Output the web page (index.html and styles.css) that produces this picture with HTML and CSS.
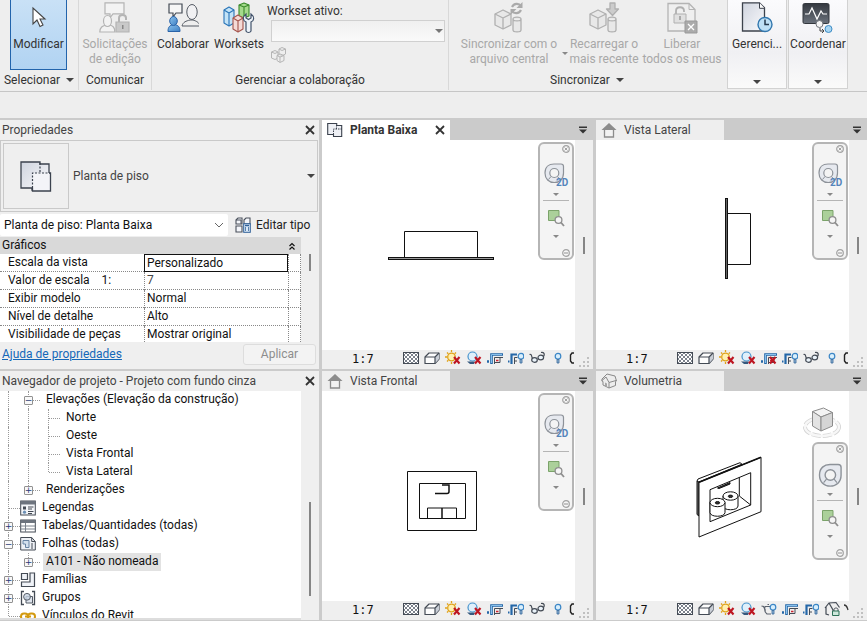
FILE: index.html
```html
<!DOCTYPE html>
<html lang="pt-BR">
<head>
<meta charset="utf-8">
<meta name="viewport" content="width=device-width, initial-scale=1">
<title>Projeto com fundo cinza</title>
<link rel="stylesheet" href="styles.css">
</head>
<body>
<svg class="sprite" aria-hidden="true">
  <defs>
    <linearGradient id="g-blue" x1="0" y1="0" x2="1" y2="1"><stop offset="0" stop-color="#8cc4ee"/><stop offset="1" stop-color="#3d7fc4"/></linearGradient>
    <linearGradient id="g-page" x1="0" y1="0" x2="1" y2="1"><stop offset="0" stop-color="#cfd4df"/><stop offset="1" stop-color="#fafafc"/></linearGradient>
    <linearGradient id="g-dark" x1="0" y1="0" x2="0" y2="1"><stop offset="0" stop-color="#34383f"/><stop offset="1" stop-color="#6b727c"/></linearGradient>
    <pattern id="p-check" width="4" height="4" patternUnits="userSpaceOnUse"><rect width="4" height="4" fill="#fff"/><path d="M0 0h2v2H0zM2 2h2v2H2z" fill="#7c828c"/></pattern>
  </defs>
  <symbol id="caret" viewBox="0 0 8 4"><path d="M0 0h8L4 4z" fill="currentColor"/></symbol>
  <symbol id="close" viewBox="0 0 10 10"><path d="M1 1l8 8M9 1L1 9" stroke="#333" stroke-width="1.8" fill="none"/></symbol>
  <symbol id="tabmenu" viewBox="0 0 10 8"><path d="M1 .5h8v1.5H1zM1 3.5h8L5 7.5z" fill="#333"/></symbol>
  <symbol id="cursor" viewBox="0 0 32 32"><path d="M10 6v16l4-4 3 6.500 3-1.500-3-6h5z" fill="#fff" stroke="#444" stroke-width="1.100"/></symbol>
  <symbol id="request" viewBox="0 0 32 32"><g fill="#f3f3f3" stroke="#b4b4b4" stroke-width="1.200"><path d="M6 .8h19v11H14l-3 4v-4H6z"/><path d="M.8 30c0-5 3-6 6-7h4c3 1 5 2 5 7z"/><ellipse cx="8.500" cy="19" rx="4" ry="5.500"/><path d="M20 21v-5c0-4 7-4 7 0v2" fill="none" stroke-width="2"/><path d="M17 20h13v10H17z" fill="#c9c9c9"/></g><path d="M23 23h1.500v4H23z" fill="#888"/></symbol>
  <symbol id="collab" viewBox="0 0 32 32"><path d="M2 2h13v9H9l-3 4v-4H2z" fill="#f6f6f6" stroke="#444b55" stroke-width="1.200"/><path d="M1 29.500c0-5 2-6 5-7h2c3 1 5 2 5 7z" fill="url(#g-blue)" stroke="#2a63a8"/><ellipse cx="6.500" cy="19" rx="3.800" ry="4.500" fill="url(#g-blue)" stroke="#2a63a8"/><path d="M15 24c1-4 4-5 8-6h3c3 1 6 2 7 6z" fill="#eee" stroke="#555b64"/><ellipse cx="25" cy="10" rx="5.200" ry="7.500" fill="#f1f1f3" stroke="#555b64"/></symbol>
  <symbol id="worksets" viewBox="0 0 32 32"><g stroke-width="1.100" stroke-linejoin="round"><path d="M16 3l5-2 5 2v11l-5 2-5-2z" fill="#a5da8c" stroke="#3a8a2a"/><path d="M16 3l5 2 5-2M21 5v11" fill="none" stroke="#3a8a2a"/><path d="M1 8l5-3 5 3v13l-5 3-5-3z" fill="#c3e3f7" stroke="#2a75b8"/><path d="M1 8l5 3 5-3M6 11v13" fill="none" stroke="#2a75b8"/><path d="M10 16l5-3 5 3v11l-5 3-5-3z" fill="#f5dbd7" stroke="#a4554d"/><path d="M10 16l5 3 5-3M15 19v11" fill="none" stroke="#a4554d"/></g><path d="M23 12v4l2.500 1.500L28 16v-4c4 3 3 7 0 8v9c-1 2-4 2-5 0v-9c-3-1-4-5 0-8z" fill="#eef3f8" stroke="#42536b" stroke-width="1.200"/></symbol>
  <symbol id="smallcubes" viewBox="0 0 16 16"><g fill="#eee" stroke="#b5b5b5"><path d="M8 2l3-1.500L14.500 2v5L11 9 8 7zM8 2l3 1.500L14.500 2"/><path d="M.5 5L4 3.500 7 5v6l-3 1.500L.5 11zM.5 5L4 6.500 7 5"/><path d="M6 8.500L9 7l4 1.500v5L9 15.500l-3-2zM6 8.500L9 10l4-1.500M9 10v5"/></g></symbol>
  <symbol id="sync" viewBox="0 0 32 32"><g fill="#e8e8e8" stroke="#b0b0b0" stroke-width="1.300" stroke-linejoin="round"><path d="M2 12l8-4 8 4v11l-8 4-8-4z"/><path d="M2 12l8 4 8-4M10 16v11" fill="none"/><path d="M20 17c0-2.500 8-2.500 8 0v11c0 2.500-8 2.500-8 0zM20 17c0 2.500 8 2.500 8 0"/></g><g fill="none" stroke="#aaa" stroke-width="2.200"><path d="M19 5c2-4 7-4 9-1M28 8c-2 4-7 4-9 1"/></g><path d="M29.500 0v6h-6zM17.500 13V7h6z" fill="#aaa"/></symbol>
  <symbol id="reload" viewBox="0 0 32 32"><g fill="#e8e8e8" stroke="#b0b0b0" stroke-width="1.300" stroke-linejoin="round"><path d="M2 12l8-4 8 4v11l-8 4-8-4z"/><path d="M2 12l8 4 8-4M10 16v11" fill="none"/><path d="M20 17c0-2.500 8-2.500 8 0v11c0 2.500-8 2.500-8 0zM20 17c0 2.500 8 2.500 8 0"/><path d="M22 1h5v6h3.500l-6 6.500-6-6.500H22z" fill="#ccc"/></g></symbol>
  <symbol id="release" viewBox="0 0 32 32"><path d="M2 1.500h21l6 6V29H2z" fill="#efefef" stroke="#b4b4b4" stroke-width="1.300"/><path d="M23 1.500v6h6" fill="none" stroke="#b4b4b4"/><path d="M10 12V9c0-5 8-5 8 0v1" fill="none" stroke="#b0b0b0" stroke-width="1.800"/><path d="M8 12h12v9H8z" fill="#e0e0e0" stroke="#b0b0b0"/><path d="M13 14h2v4h-2z" fill="#aaa"/><path d="M19 19h12v12H19z" fill="#ababab" stroke="#999"/><path d="M22 22l6 6M28 22l-6 6" stroke="#fff" stroke-width="1.300"/></symbol>
  <symbol id="manage" viewBox="0 0 32 32"><path d="M1.500.8h17l5 5V29h-22z" fill="url(#g-page)" stroke="#3c424c" stroke-width="1.300"/><path d="M18.500.8v5.500h5" fill="#fff" stroke="#3c424c"/><circle cx="24" cy="22.500" r="7" fill="#bfe0f5" stroke="#3277ae" stroke-width="1.400"/><path d="M24 17.500v5h4" fill="none" stroke="#26394c" stroke-width="1.500"/></symbol>
  <symbol id="coord" viewBox="0 0 32 32"><rect x="1" y="1.500" width="26" height="20" rx="1.500" fill="url(#g-dark)" stroke="#33373d"/><path d="M3 12h4l3-6 5 11 4-8 2 3h4" fill="none" stroke="#fff" stroke-width="1.200"/><circle cx="17.500" cy="22" r="3.500" fill="#f5f5f5" stroke="#73777d"/><path d="M18 26v3h4M20 27l2 2-2 2" fill="none" stroke="#444"/><circle cx="26.500" cy="27" r="3.500" fill="#a8d6f4" stroke="#3e8cc4"/></symbol>
  <symbol id="plan-lg" viewBox="0 0 32 32"><path d="M1 2h19v2h9v26H12v-2H1z" fill="url(#g-page)" stroke="#3b424e" stroke-width="1.300"/><path d="M12.500 13H30v18H12.500z" fill="#f3f4f8"/><path d="M29 13h1.500v18H12.500v-3" fill="none" stroke="#3b424e" stroke-width="1.300"/><path d="M20 3v10M12.500 28V13H30" fill="none" stroke="#3b424e" stroke-width="1.200" stroke-dasharray="2 1.500"/></symbol>
  <symbol id="plan-sm" viewBox="0 0 16 16"><path d="M.7 1.500h9v2h5v11H6.500v-2H.7z" fill="#eef0f5" stroke="#3b424e" stroke-width="1.100"/><path d="M9.500 3v4M6.500 12.500V7h9" fill="none" stroke="#3b424e" stroke-dasharray="1.500 1"/></symbol>
  <symbol id="house" viewBox="0 0 16 16"><path d="M3.500 7v8h9V7z" fill="#f2f2f2" stroke="#8c8c8c" stroke-width="1.300"/><path d="M8 1l7.500 7h-15z" fill="#8c8c8c"/></symbol>
  <symbol id="house3d" viewBox="0 0 16 16"><path d="M1 6l5-5 8 2 1.500 5-1 .5v4L8 15l-6-3V8.500L.8 8z" fill="#ededed" stroke="#898989" stroke-linejoin="round"/><path d="M1 7.500L5 4l3 5.500 7-2M8 9.500V15" fill="none" stroke="#898989"/><path d="M4 13V9.500l2 1V14z" fill="#a5a5a5"/></symbol>
  <symbol id="edit-type" viewBox="0 0 16 16"><g fill="#f4f6fa" stroke="#4a515c" stroke-width="1.100"><path d="M1 3l2-2h4v6H1zM9 3l2-2h4v6H9zM1 9h6v6H1z"/></g><path d="M1 3h5V7" fill="none" stroke="#4a515c"/><rect x="8.700" y="6.700" width="6.600" height="8.600" fill="#dbe9f7" stroke="#2f6098"/><path d="M10 8.500h4M10 11h1M13 11h1M10 13h1M13 13h1" stroke="#2f6098" stroke-width="1.300"/></symbol>
  <symbol id="legend" viewBox="0 0 16 16"><rect x=".7" y="1" width="14.600" height="14" fill="#f4f6f9" stroke="#444b55"/><path d="M1 1h14v3.500H1z" fill="#6d747e"/><path d="M3 6.500h3v3H3z" fill="#444b55"/><circle cx="4.500" cy="12.200" r="1.600" fill="#6b8fb5"/><path d="M8 7h5.500M8 9h4M8 11.500h5.500M8 13.500h4" stroke="#444b55"/></symbol>
  <symbol id="table" viewBox="0 0 16 16"><rect x=".7" y="2" width="14.600" height="12" fill="#fff" stroke="#444b55"/><path d="M1 2h14v3H1z" fill="#6d747e"/><path d="M1 8h14M1 11h14M5.500 5v9" stroke="#7b828c"/></symbol>
  <symbol id="sheet" viewBox="0 0 16 16"><path d="M.7 1.500h11l3.600 4V14H.7z" fill="#eef1f6" stroke="#444b55"/><path d="M11.700 1.500v4h3.500" fill="none" stroke="#444b55"/><path d="M3 8V4.500h6v7H5.500V8z" fill="#d3e0ee" stroke="#6783a3"/><path d="M12 7v6" stroke="#444b55"/></symbol>
  <symbol id="family" viewBox="0 0 16 16"><path d="M1.500 1.500h6v6h-6zM10 1v9H1.500v4.500h13V1z" fill="#f0f3f8" stroke="#444b55" stroke-width="1.200"/></symbol>
  <symbol id="group" viewBox="0 0 16 16"><path d="M4 1.500H1.500v13H4M12 1.500h2.500v13H12" fill="none" stroke="#444b55" stroke-width="1.300"/><path d="M6 6.500h6.500V13H6z" fill="#dfe5ee" stroke="#555c67"/><circle cx="7" cy="6.800" r="3.400" fill="#c7d3e2" fill-opacity=".8" stroke="#555c67"/></symbol>
  <symbol id="link" viewBox="0 0 16 16"><g fill="none" stroke="#d39a10" stroke-width="2"><rect x="1" y="5.500" width="7" height="6" rx="3"/><rect x="8" y="5.500" width="7" height="6" rx="3"/><path d="M5 8.500h6"/></g></symbol>
  <symbol id="s-check" viewBox="0 0 16 16"><rect x=".5" y="2.500" width="15" height="11" fill="url(#p-check)" stroke="#444b55"/></symbol>
  <symbol id="s-box" viewBox="0 0 16 16"><path d="M1 7l4-4h10v6l-4 4.500H1z" fill="#fdfdfd" stroke="#444b55" stroke-width="1.200" stroke-linejoin="round"/><path d="M11 7l4-4v6l-4 4.500z" fill="#c9ced6"/><path d="M1 7h10v6.500M11 7l4-4" fill="none" stroke="#444b55" stroke-width="1.200"/></symbol>
  <symbol id="redx" viewBox="0 0 16 16"><path d="M9 7l5.500 6.500M14.500 7L9 13.500" stroke="#bd1622" stroke-width="2.100"/></symbol>
  <symbol id="s-sun" viewBox="0 0 16 16"><circle cx="6.500" cy="7" r="3.800" fill="#fff0b0" stroke="#e0a21a" stroke-width="1.300"/><path d="M6.500 0v2M0 7h2M2 2.500l1.300 1.300M11 2.500L9.700 3.800M2 11.500l1.300-1.300M6.500 12v2" stroke="#e0a21a" stroke-width="1.300"/><use href="#redx"/></symbol>
  <symbol id="s-shadow" viewBox="0 0 16 16"><circle cx="6.500" cy="6.500" r="4.500" fill="#dff0fb" stroke="#4592cc" stroke-width="1.200"/><path d="M1 11.500h8l-1 2.500H4z" fill="#36597e"/><use href="#redx"/></symbol>
  <symbol id="s-crop" viewBox="0 0 16 16"><path d="M0 11.500h2M4.500 14V4.500H16" fill="none" stroke="#2467a8" stroke-width="2.600"/><path d="M4.500 13V4.500H15" fill="none" stroke="#86c0ec"/><path d="M7.500 14V7.500H16M13 8v4.500H7" fill="none" stroke="#444b55"/><path d="M9 10.500h2.500" fill="none" stroke="#cc2430" stroke-width="1.500"/></symbol>
  <symbol id="s-cropx" viewBox="0 0 16 16"><use href="#s-crop"/><use href="#redx"/></symbol>
  <symbol id="bulb" viewBox="0 0 16 16"><circle cx="8" cy="6.200" r="2.800" fill="#d9effc" stroke="#3b86c6" stroke-width="1.200"/><path d="M7 9.500h2V13H7z" fill="#8fb4d4" stroke="#37689a" stroke-width=".8"/></symbol>
  <symbol id="s-cropbulb" viewBox="0 0 16 16"><path d="M0 11.500h1.500M3.500 14V4.500H9" fill="none" stroke="#2467a8" stroke-width="2.200"/><path d="M6.500 14V7.500H9.500M9 11H7" fill="none" stroke="#444b55"/><use href="#bulb" x="5"/></symbol>
  <symbol id="s-glasses" viewBox="0 0 16 16"><path d="M.5 4.500c2-1 2 2 3 4M12 2.500c3-.5 4 1.500 2.500 4" fill="none" stroke="#444b55" stroke-width="1.200"/><ellipse cx="5.500" cy="10" rx="2.800" ry="2.300" fill="#eaf3fa" stroke="#444b55" stroke-width="1.200"/><ellipse cx="11.800" cy="7.500" rx="2.800" ry="2.300" fill="#eaf3fa" stroke="#444b55" stroke-width="1.200"/></symbol>
  <symbol id="s-bulb" viewBox="0 0 16 16"><use href="#bulb"/></symbol>
  <symbol id="s-part" viewBox="0 0 16 16"><path d="M6 3H4L2.500 5v6L4 13h2" fill="none" stroke="#222" stroke-width="1.400"/></symbol>
  <symbol id="s-partarc" viewBox="0 0 16 16"><path d="M2 4c3 0 3 2 4 5" fill="none" stroke="#333" stroke-width="1.300"/></symbol>
  <symbol id="s-teapot" viewBox="0 0 16 16"><path d="M.5 5l2 .5 2 4M4 5.500h6M6.500 3.500h1.500M4 5.500c-1 4 0 6 2 7.500h4" fill="none" stroke="#5c636e" stroke-width="1.200"/><use href="#bulb" x="4"/></symbol>
  <symbol id="s-houselock" viewBox="0 0 16 16"><path d="M1 7l4-5 7-.5 3.500 5M2 6v7l3 1M5 2l4 7v3" fill="#eee" stroke="#444b55" stroke-width="1.200"/><path d="M10 10V8.500c0-2 4-2 4 0V10" fill="none" stroke="#444b55"/><path d="M8.500 10h6.500v4.500H8.500z" fill="#cfe8dc" stroke="#2e7258"/></symbol>
  <symbol id="grip" viewBox="0 0 12 12"><path d="M8 0h2v2H8zM4 4h2v2H4zM8 4h2v2H8zM0 8h2v2H0zM4 8h2v2H4zM8 8h2v2H8z" fill="#c0c0c0"/></symbol>
  <symbol id="n-close" viewBox="0 0 8 8"><circle cx="4" cy="4" r="3.300" fill="#f6f6f6" stroke="#a2a2a2" stroke-width="1.200"/><path d="M2.500 2.500l3 3M5.500 2.500l-3 3" stroke="#a2a2a2"/></symbol>
  <symbol id="n-min" viewBox="0 0 8 8"><circle cx="4" cy="4" r="3.300" fill="#f6f6f6" stroke="#a2a2a2" stroke-width="1.200"/><path d="M2 4h4" stroke="#a2a2a2" stroke-width="1.200"/></symbol>
  <symbol id="n-wheel" viewBox="0 0 28 28"><path d="M3 12c0-6 4-9 9-9h7c1.500 0 2.500 1 2.500 2.500V12c0 6-4 9.500-9.300 9.500S3 18 3 12z" fill="#e6e9ef" stroke="#8d9299" stroke-width="1.200"/><circle cx="12.300" cy="12" r="4.500" fill="#f4f4f4" stroke="#8d9299" stroke-width="1.200"/><path d="M9 15.500L6.500 18.500M15.500 15.500l2.500 3" stroke="#8d9299"/></symbol>
  <symbol id="n-zoom" viewBox="0 0 18 18"><path d="M1.500 1.500H12v10H1.500z" fill="#abd09a" stroke="#7ba36a"/><circle cx="11.500" cy="11" r="3.400" fill="#f5f5f5" stroke="#8e8e8e" stroke-width="1.300"/><path d="M14 13.500l3 3.500" stroke="#8e8e8e" stroke-width="1.800"/></symbol>
</svg>

<header class="ribbon">
  <section class="group g-select">
    <div class="tools"><button class="tool active"><svg class="i32"><use href="#cursor"/></svg><span>Modificar</span></button></div>
    <button class="group-label">Selecionar <svg class="caret"><use href="#caret"/></svg></button>
  </section>
  <section class="group g-comm">
    <div class="tools"><button class="tool" disabled><svg class="i32"><use href="#request"/></svg><span>Solicitações<br>de edição</span></button></div>
    <div class="group-label">Comunicar</div>
  </section>
  <section class="group g-collab">
    <div class="tools">
      <button class="tool"><svg class="i32"><use href="#collab"/></svg><span>Colaborar</span></button>
      <button class="tool"><svg class="i32"><use href="#worksets"/></svg><span>Worksets</span></button>
      <div class="workset">
        <label for="workset">Workset ativo:</label>
        <div class="combo"><select id="workset"><option></option></select><svg class="caret"><use href="#caret"/></svg></div>
        <button class="mini" disabled aria-label="Exibir worksets"><svg class="i16"><use href="#smallcubes"/></svg></button>
      </div>
    </div>
    <div class="group-label">Gerenciar a colaboração</div>
  </section>
  <section class="group g-sync">
    <div class="tools">
      <button class="tool t-sync" disabled><svg class="i32"><use href="#sync"/></svg><span>Sincronizar com o<br>arquivo central</span></button>
      <button class="split" disabled aria-label="Mais opções"><svg><use href="#caret"/></svg></button>
      <button class="tool t-reload" disabled><svg class="i32"><use href="#reload"/></svg><span>Recarregar o<br>mais recente</span></button>
      <button class="tool t-release" disabled><svg class="i32"><use href="#release"/></svg><span>Liberar<br>todos os meus</span></button>
    </div>
    <button class="group-label">Sincronizar <svg class="caret"><use href="#caret"/></svg></button>
  </section>
  <button class="folded"><svg class="i32"><use href="#manage"/></svg><span>Gerenci...</span><svg class="caret"><use href="#caret"/></svg></button>
  <button class="folded"><svg class="i32"><use href="#coord"/></svg><span>Coordenar</span><svg class="caret"><use href="#caret"/></svg></button>
</header>

<main class="workspace">
  <section class="panel">
    <header class="panel-title"><h2>Propriedades</h2><button aria-label="Fechar"><svg class="i10"><use href="#close"/></svg></button></header>
    <button class="type">
      <span class="thumb"><svg class="i32"><use href="#plan-lg"/></svg></span>
      <span class="type-name">Planta de piso</span>
      <svg class="caret"><use href="#caret"/></svg>
    </button>
    <div class="instance">
      <div class="picker"><select aria-label="Instância"><option>Planta de piso: Planta Baixa</option></select><svg viewBox="0 0 10 6"><path d="M1 1l4 4 4-4" fill="none" stroke="#666"/></svg></div>
      <button class="edit"><svg class="i16"><use href="#edit-type"/></svg>Editar tipo</button>
    </div>
    <div class="scroller">
      <div class="props">
        <table>
          <colgroup><col class="c-name"><col class="c-value"><col class="c-link"></colgroup>
          <thead><tr><th colspan="3"><div class="cat">Gráficos<svg viewBox="0 0 8 8"><path d="M1.500 4L4 1.500 6.500 4M1.500 7.500L4 5l2.500 2.500" fill="none" stroke="#111" stroke-width="1.200"/></svg></div></th></tr></thead>
          <tbody>
            <tr><th scope="row">Escala da vista</th><td class="editing"><input aria-label="Escala da vista" value="Personalizado"></td><td></td></tr>
            <tr><th scope="row">Valor de escala &nbsp;&nbsp; 1:</th><td class="muted">7</td><td></td></tr>
            <tr><th scope="row">Exibir modelo</th><td>Normal</td><td></td></tr>
            <tr><th scope="row">Nível de detalhe</th><td>Alto</td><td></td></tr>
            <tr><th scope="row">Visibilidade de peças</th><td>Mostrar original</td><td></td></tr>
          </tbody>
        </table>
      </div>
      <div class="track top"><i></i></div>
    </div>
    <footer class="panel-foot"><a href="#ajuda">Ajuda de propriedades</a><button disabled>Aplicar</button></footer>
  </section>

  <section class="view">
    <header class="tabs"><div class="tab on"><svg class="i16"><use href="#plan-sm"/></svg><span>Planta Baixa</span><button aria-label="Fechar"><svg class="i10"><use href="#close"/></svg></button></div><button class="menu" aria-label="Vistas"><svg class="i10"><use href="#tabmenu"/></svg></button></header>
    <div class="stage">
      <div class="canvas">
        <svg class="drawing" viewBox="0 0 253 210"><g fill="none" stroke="#111"><path d="M82.500 117V91.500h73V117"/><rect x="66.500" y="117.500" width="105" height="2" fill="#999"/></g></svg>
        <nav class="navbar"><button aria-label="Fechar"><svg class="i8"><use href="#n-close"/></svg></button><button class="wheel" aria-label="Roda de navegação"><svg viewBox="0 0 28 28"><use href="#n-wheel"/><text x="14" y="25">2D</text></svg></button><button class="drop" aria-label="Opções da roda"><svg><use href="#caret"/></svg></button><hr><button class="zoom" aria-label="Zoom"><svg><use href="#n-zoom"/></svg></button><button class="drop" aria-label="Opções de zoom"><svg><use href="#caret"/></svg></button><button class="end" aria-label="Minimizar"><svg class="i8"><use href="#n-min"/></svg></button></nav>
      </div>
      <div class="track"><i></i></div>
    </div>
    <footer class="status"><div class="bar"><button class="scale">1:7</button><button aria-label="Nível de detalhe"><svg class="i16"><use href="#s-check"/></svg></button><button aria-label="Estilo visual"><svg class="i16"><use href="#s-box"/></svg></button><button aria-label="Sol"><svg class="i16"><use href="#s-sun"/></svg></button><button aria-label="Sombras"><svg class="i16"><use href="#s-shadow"/></svg></button><button aria-label="Recorte"><svg class="i16"><use href="#s-crop"/></svg></button><button aria-label="Região de recorte"><svg class="i16"><use href="#s-cropbulb"/></svg></button><button aria-label="Isolar"><svg class="i16"><use href="#s-glasses"/></svg></button><button aria-label="Revelar"><svg class="i16"><use href="#s-bulb"/></svg></button><button class="more" aria-label="Mais"><svg class="i16"><use href="#s-part"/></svg></button></div><svg class="grip"><use href="#grip"/></svg></footer>
  </section>

  <section class="view">
    <header class="tabs"><div class="tab"><svg class="i16"><use href="#house"/></svg><span>Vista Lateral</span></div><button class="menu" aria-label="Vistas"><svg class="i10"><use href="#tabmenu"/></svg></button></header>
    <div class="stage">
      <div class="canvas">
        <svg class="drawing" viewBox="0 0 253 210"><g fill="none" stroke="#111"><path d="M132 73.500h22.500v51H132"/><rect x="129.500" y="58.500" width="2" height="80" fill="#666"/></g></svg>
        <nav class="navbar"><button aria-label="Fechar"><svg class="i8"><use href="#n-close"/></svg></button><button class="wheel" aria-label="Roda de navegação"><svg viewBox="0 0 28 28"><use href="#n-wheel"/><text x="14" y="25">2D</text></svg></button><button class="drop" aria-label="Opções da roda"><svg><use href="#caret"/></svg></button><hr><button class="zoom" aria-label="Zoom"><svg><use href="#n-zoom"/></svg></button><button class="drop" aria-label="Opções de zoom"><svg><use href="#caret"/></svg></button><button class="end" aria-label="Minimizar"><svg class="i8"><use href="#n-min"/></svg></button></nav>
      </div>
      <div class="track"><i></i></div>
    </div>
    <footer class="status"><div class="bar"><button class="scale">1:7</button><button aria-label="Nível de detalhe"><svg class="i16"><use href="#s-check"/></svg></button><button aria-label="Estilo visual"><svg class="i16"><use href="#s-box"/></svg></button><button aria-label="Sol"><svg class="i16"><use href="#s-sun"/></svg></button><button aria-label="Sombras"><svg class="i16"><use href="#s-shadow"/></svg></button><button aria-label="Recorte"><svg class="i16"><use href="#s-cropx"/></svg></button><button aria-label="Região de recorte"><svg class="i16"><use href="#s-cropbulb"/></svg></button><button aria-label="Isolar"><svg class="i16"><use href="#s-glasses"/></svg></button><button aria-label="Revelar"><svg class="i16"><use href="#s-bulb"/></svg></button><button class="more" aria-label="Mais"><svg class="i16"><use href="#s-part"/></svg></button></div><svg class="grip"><use href="#grip"/></svg></footer>
  </section>

  <section class="panel">
    <header class="panel-title"><h2>Navegador de projeto - Projeto com fundo cinza</h2><button aria-label="Fechar"><svg class="i10"><use href="#close"/></svg></button></header>
    <div class="scroller">
      <ul class="tree">
        <li><i class="v"></i><i class="v h"><button aria-label="Recolher">−</button></i><span class="sub">Elevações (Elevação da construção)</span></li>
        <li><i class="v"></i><i class="v"></i><i class="v h"></i><span class="sub">Norte</span></li>
        <li><i class="v"></i><i class="v"></i><i class="v h"></i><span class="sub">Oeste</span></li>
        <li><i class="v"></i><i class="v"></i><i class="v h"></i><span class="sub">Vista Frontal</span></li>
        <li><i class="v"></i><i class="v"></i><i class="v h last"></i><span class="sub">Vista Lateral</span></li>
        <li><i class="v"></i><i class="v h last"><button aria-label="Expandir">+</button></i><span class="sub">Renderizações</span></li>
        <li><i class="v h"></i><svg class="i16"><use href="#legend"/></svg><span>Legendas</span></li>
        <li><i class="v h"><button aria-label="Expandir">+</button></i><svg class="i16"><use href="#table"/></svg><span>Tabelas/Quantidades (todas)</span></li>
        <li><i class="v h"><button aria-label="Recolher">−</button></i><svg class="i16"><use href="#sheet"/></svg><span>Folhas (todas)</span></li>
        <li><i class="v"></i><i class="v h last"><button aria-label="Expandir">+</button></i><span class="sub picked">A101 - Não nomeada</span></li>
        <li><i class="v h"><button aria-label="Expandir">+</button></i><svg class="i16"><use href="#family"/></svg><span>Famílias</span></li>
        <li><i class="v h"><button aria-label="Expandir">+</button></i><svg class="i16"><use href="#group"/></svg><span>Grupos</span></li>
        <li><i class="v h last"></i><svg class="i16"><use href="#link"/></svg><span>Vínculos do Revit</span></li>
      </ul>
      <div class="track low"><i></i></div>
    </div>
  </section>

  <section class="view">
    <header class="tabs"><div class="tab"><svg class="i16"><use href="#house"/></svg><span>Vista Frontal</span></div><button class="menu" aria-label="Vistas"><svg class="i10"><use href="#tabmenu"/></svg></button></header>
    <div class="stage">
      <div class="canvas">
        <svg class="drawing" viewBox="0 0 253 210"><g fill="none" stroke="#111"><path d="M85.500 80.500h69v59h-69zM97.500 92.500h46v35h-46zM105.500 127v-10h29v10"/><path d="M120 117v10M113 102.500h12q2 0 2-2V94h-7" stroke-width="1.500"/></g></svg>
        <nav class="navbar"><button aria-label="Fechar"><svg class="i8"><use href="#n-close"/></svg></button><button class="wheel" aria-label="Roda de navegação"><svg viewBox="0 0 28 28"><use href="#n-wheel"/><text x="14" y="25">2D</text></svg></button><button class="drop" aria-label="Opções da roda"><svg><use href="#caret"/></svg></button><hr><button class="zoom" aria-label="Zoom"><svg><use href="#n-zoom"/></svg></button><button class="drop" aria-label="Opções de zoom"><svg><use href="#caret"/></svg></button><button class="end" aria-label="Minimizar"><svg class="i8"><use href="#n-min"/></svg></button></nav>
      </div>
      <div class="track"><i></i></div>
    </div>
    <footer class="status"><div class="bar"><button class="scale">1:7</button><button aria-label="Nível de detalhe"><svg class="i16"><use href="#s-check"/></svg></button><button aria-label="Estilo visual"><svg class="i16"><use href="#s-box"/></svg></button><button aria-label="Sol"><svg class="i16"><use href="#s-sun"/></svg></button><button aria-label="Sombras"><svg class="i16"><use href="#s-shadow"/></svg></button><button aria-label="Recorte"><svg class="i16"><use href="#s-crop"/></svg></button><button aria-label="Região de recorte"><svg class="i16"><use href="#s-cropbulb"/></svg></button><button aria-label="Isolar"><svg class="i16"><use href="#s-glasses"/></svg></button><button aria-label="Revelar"><svg class="i16"><use href="#s-bulb"/></svg></button><button class="more" aria-label="Mais"><svg class="i16"><use href="#s-part"/></svg></button></div><svg class="grip"><use href="#grip"/></svg></footer>
  </section>

  <section class="view">
    <header class="tabs"><div class="tab"><svg class="i16"><use href="#house3d"/></svg><span>Volumetria</span></div><button class="menu" aria-label="Vistas"><svg class="i10"><use href="#tabmenu"/></svg></button></header>
    <div class="stage">
      <div class="canvas">
        <svg class="drawing" viewBox="0 0 253 210">
          <g fill="#fff" stroke="#111" stroke-linejoin="round">
            <path d="M101 90v33.500l2 1.500V91.500z" fill="#777"/>
            <path d="M101 90l1-2 42-16.300 2 1.500L103 91z"/>
            <path d="M103 91.300l62-25v54.400L103 146z"/>
            <path d="M103 91.300l62-25" stroke-width="1.700"/>
            <path d="M114 98.700l40.700-17V114L114 130.700z"/>
            <path d="M143.300 86.300V105l11.400 9" fill="none"/>
            <path d="M121.500 97l12.500-5.500v1.500L123 97.500z" fill="#333"/>
            <path d="M127 105v10c0 5 15 5 15 0v-10"/>
            <ellipse cx="134.500" cy="105" rx="7.500" ry="4.200"/>
            <ellipse cx="134.500" cy="105.300" rx="2.200" ry="1.200" fill="#333"/>
            <path d="M114 111.500v10c0 5 15 5 15 0v-10"/>
            <ellipse cx="121.500" cy="111.500" rx="7.500" ry="4.200"/>
            <ellipse cx="121.500" cy="111.800" rx="2.200" ry="1.200" fill="#333"/>
          </g>
          <ellipse cx="226" cy="36" rx="17" ry="9" fill="none" stroke="#d3d3d3" stroke-width="4" stroke-dasharray="9 2"/>
          <ellipse cx="226" cy="36" rx="17" ry="9" fill="none" stroke="#f7f7f7" stroke-width="2.400"/>
          <g stroke="#8c8c8c" stroke-linejoin="round"><path d="M216.500 20.500l11-3.500 9 4.500-11.500 4.500z" fill="#f3f3f3"/><path d="M216.500 20.500L225 26v14l-8.500-5z" fill="#e3e3e3"/><path d="M225 26l11.500-4.500V35L225 40z" fill="#d5d5d5"/></g>
        </svg>
        <nav class="navbar below-cube"><button aria-label="Fechar"><svg class="i8"><use href="#n-close"/></svg></button><button class="wheel" aria-label="Roda de navegação"><svg viewBox="0 0 24 24"><use href="#n-wheel" width="28" height="28"/></svg></button><button class="drop" aria-label="Opções da roda"><svg><use href="#caret"/></svg></button><hr><button class="zoom" aria-label="Zoom"><svg><use href="#n-zoom"/></svg></button><button class="drop" aria-label="Opções de zoom"><svg><use href="#caret"/></svg></button><button class="end" aria-label="Minimizar"><svg class="i8"><use href="#n-min"/></svg></button></nav>
      </div>
      <div class="track"><i></i></div>
    </div>
    <footer class="status"><div class="bar"><button class="scale">1:7</button><button aria-label="Nível de detalhe"><svg class="i16"><use href="#s-check"/></svg></button><button aria-label="Estilo visual"><svg class="i16"><use href="#s-box"/></svg></button><button aria-label="Sol"><svg class="i16"><use href="#s-sun"/></svg></button><button aria-label="Sombras"><svg class="i16"><use href="#s-shadow"/></svg></button><button aria-label="Renderizar"><svg class="i16"><use href="#s-teapot"/></svg></button><button aria-label="Recorte"><svg class="i16"><use href="#s-crop"/></svg></button><button aria-label="Região de recorte"><svg class="i16"><use href="#s-cropbulb"/></svg></button><button aria-label="Bloquear"><svg class="i16"><use href="#s-houselock"/></svg></button><button class="more" aria-label="Mais"><svg class="i16"><use href="#s-partarc"/></svg></button></div><svg class="grip"><use href="#grip"/></svg></footer>
  </section>
</main>
</body>
</html>
```
FILE: styles.css
```css
* { box-sizing: border-box; }

body {
  margin: 0;
  height: 100vh;
  display: flex;
  flex-direction: column;
  gap: 26px;
  overflow: hidden;
  background: #eee;
  color: #333;
  font: 12px/15px Roboto, "Open Sans", sans-serif;
}

button, select, input { font: inherit; color: inherit; margin: 0; padding: 0; border: 0; background: none; }
button { display: inline-flex; align-items: center; justify-content: center; }
select { appearance: none; }
svg { display: block; flex: none; }
h2 { margin: 0; font: inherit; }

.sprite { position: absolute; width: 0; height: 0; }
.i8 { width: 8px; height: 8px; }
.i10 { width: 10px; height: 10px; }
.i16 { width: 16px; height: 16px; }
.i32 { width: 32px; height: 32px; }
.caret { width: 8px; height: 4px; color: #444; }

/* Ribbon */
.ribbon { display: flex; height: 92px; border-bottom: 1px solid #c6c6c6; }
.group { display: flex; flex-direction: column; border-right: 1px solid #d8d8d8; margin-bottom: 1px; }
.tools { display: flex; flex: 1; }
.group-label { height: 20px; display: flex; align-items: center; justify-content: center; gap: 6px; white-space: nowrap; }
.tool { flex-direction: column; justify-content: flex-start; gap: 3px; padding-top: 2px; width: 56px; white-space: nowrap; text-align: center; }
.tool:disabled { color: #a8a8a8; }
.tool.active { width: 57px; background: linear-gradient(#c9e1f6, #b1d3f2); border: 1px solid #2264ac; border-top: 0; }
.g-select { width: 79px; }
.g-select .tools { padding-left: 10px; }
.g-comm { width: 73px; }
.g-comm .tool { width: 100%; }
.g-collab { width: 297px; }
.g-collab .tools { padding-left: 3px; }
.workset { flex: 1; padding: 4px 3px 0 0; display: flex; flex-direction: column; align-items: flex-start; }
.combo { display: grid; align-items: center; align-self: stretch; margin: 1px 0 5px 4px; }
.combo > * { grid-area: 1 / 1; }
.combo select { width: 100%; height: 22px; border: 1px solid #d0d0d0; background: linear-gradient(#f0f0f0, #fafafa); }
.combo .caret { justify-self: end; margin-right: 2px; color: #777; pointer-events: none; }
.mini { margin-left: 4px; }
.g-sync { width: 276px; border-right: 0; }
.g-sync .tools { padding-left: 7px; }
.t-sync { width: 106px; }
.t-reload { width: 72px; }
.t-release { width: 84px; }
.split { width: 6px; padding-top: 36px; color: #888; }
.split svg { width: 6px; height: 3px; }
.folded { width: 60px; margin: 0 0 2px 2px; padding: 2px 0 4px; flex-direction: column; justify-content: flex-start; gap: 3px; border: 1px solid #d2d2d2; border-top: 0; background: linear-gradient(#fbfbfd, #f0f0f3 60%, #fafafa); }
.folded + .folded { margin-left: 1px; }
.folded .caret { margin-top: auto; }

/* Workspace grid */
.workspace {
  flex: 1;
  min-height: 0;
  display: grid;
  grid-template: 1fr 1fr / 319px 1fr 1fr;
  gap: 2px 3px;
  padding: 2px 0 1px;
  background: #cbcbcb;
}
.workspace > * { min-width: 0; min-height: 0; display: flex; flex-direction: column; background: #efefef; }

/* Palettes */
.panel-title { display: flex; align-items: center; justify-content: space-between; height: 20px; padding: 0 4px 0 2px; }
.panel-title h2 { color: #444; white-space: nowrap; }
.type { height: 72px; margin-right: 1px; padding: 0 2px; gap: 4px; justify-content: flex-start; border: 1px solid #c9c9c9; }
.thumb { width: 66px; height: 66px; display: grid; place-items: center; border: 1px solid #c9c9c9; }
.type .caret { margin-left: auto; }
.type-name { color: #444; }
.instance { display: flex; align-items: center; gap: 7px; padding: 2px 0 1px; }
.picker { width: 228px; display: grid; align-items: center; }
.picker > * { grid-area: 1 / 1; }
.picker select { height: 22px; padding-left: 4px; background: #fff; color: #111; border-radius: 2px; }
.picker svg { width: 10px; height: 6px; justify-self: end; margin-right: 4px; pointer-events: none; }
.edit { gap: 5px; color: #222; white-space: nowrap; }
.scroller { flex: 1; min-height: 0; display: flex; }
.props { flex: 1; overflow: hidden; color: #111; }
table { width: 301px; table-layout: fixed; border-collapse: separate; border-spacing: 0; background: #fff; }
.c-name { width: 144px; }
.c-value { width: 144px; }
.c-link { width: 13px; }
th, td { height: 18px; padding: 0; font-weight: normal; text-align: left; white-space: nowrap; }
tbody th { padding-left: 8px; }
tbody th, tbody td { border-bottom: 1px dotted #888; }
tbody td { padding-left: 2px; border-left: 1px dotted #888; }
tbody td:last-child { padding: 0; border-right: 1px dotted #888; }
thead th { height: 17px; padding-left: 2px; background: #d9d9d9; }
.cat { display: flex; align-items: center; justify-content: space-between; padding-right: 5px; }
.cat svg { width: 8px; height: 8px; }
tbody .editing { padding: 0; border: 1px solid #111; }
.editing input { display: block; width: 100%; height: 16px; padding-left: 2px; }
.muted { color: #444; }
.track { width: 18px; display: flex; justify-content: center; align-items: center; background: #efefef; }
.track i { width: 2px; height: 17px; background: #858585; }
.track.top { align-items: flex-start; padding-top: 17px; }
.track.low { align-items: flex-end; padding-bottom: 24px; }
.track.low i { height: 94px; }
.panel-foot { display: flex; align-items: center; justify-content: space-between; height: 27px; padding: 0 3px 2px 2px; }
.panel-foot a { color: #1467b8; }
.panel-foot button { width: 73px; height: 21px; color: #8d8d8d; border: 1px solid #ddd; border-radius: 3px; background: #f3f3f3; }

/* Project tree */
.tree { flex: 1; min-width: 0; margin: 0; padding: 0; overflow: hidden; list-style: none; background: #fff; color: #111; border-bottom: 2px solid #ddd; }
.tree li { display: flex; align-items: center; height: 18px; white-space: nowrap; }
.tree li > i { position: relative; width: 20px; height: 18px; flex: none; }
.tree li > i::before { content: ""; position: absolute; left: 8px; top: 0; height: 100%; border-left: 1px dotted #999; }
.tree li > i.last::before { height: 50%; }
.tree li > i.h::after { content: ""; position: absolute; left: 9px; right: 0; top: 9px; border-top: 1px dotted #999; }
.tree button { position: absolute; z-index: 1; left: 4px; top: 5px; width: 9px; height: 9px; border: 1px solid #919191; border-radius: 1px; background: #f8f8f8; color: #2a3c78; font: 9px/7px "DejaVu Sans", sans-serif; }
.tree span { padding: 1px 3px 2px 6px; }
.tree .picked { margin-left: 3px; padding-left: 3px; background: #e2e2e2; }

/* Views */
.tabs { display: flex; height: 20px; background: #cbcbcb; }
.tab { width: 128px; display: flex; align-items: center; gap: 7px; padding: 0 5px; background: #eee; color: #444; white-space: nowrap; }
.tab.on { background: #fff; color: #333; font-weight: bold; }
.tab button { margin-left: auto; }
.menu { margin-left: auto; padding-right: 5px; }
.stage { flex: 1; min-height: 0; display: flex; }
.canvas { position: relative; flex: 1; min-width: 0; background: #fff; }
.drawing { width: 100%; height: 100%; }
.navbar { position: absolute; top: 2px; right: 1px; width: 36px; height: 118px; display: flex; flex-direction: column; align-items: center; padding: 1px 2px; border: 2px solid #b5b5b5; border-radius: 6px; background: #f4f4f4; }
.navbar.below-cube { top: 51px; }
.navbar > button:first-child, .navbar .end { align-self: flex-end; }
.wheel { margin: 8px 0 2px; }
.wheel svg { width: 28px; height: 28px; }
.wheel text { font: bold 10px Roboto, sans-serif; fill: #5485bb; }
.drop { color: #888; padding: 2px 0; }
.drop svg { width: 6px; height: 3px; }
.navbar hr { width: 26px; margin: 2px 0 8px; border: 0; border-top: 1px solid #b5b5b5; }
.zoom { margin-bottom: 6px; }
.zoom svg { width: 18px; height: 18px; }
.navbar .end { margin-top: auto; }
.status { display: flex; height: 19px; background: #efefef; }
.bar { flex: 1; min-width: 0; display: flex; overflow: hidden; padding-left: 30px; }
.bar button { flex: none; width: 21px; height: 16px; }
.bar .scale { width: 48px; height: 18px; justify-content: flex-start; color: #111; font: 12px/18px "DejaVu Sans Mono", monospace; }
.bar .more { width: 16px; }
.grip { width: 12px; height: 12px; margin: 7px 2px 0 4px; }
```
